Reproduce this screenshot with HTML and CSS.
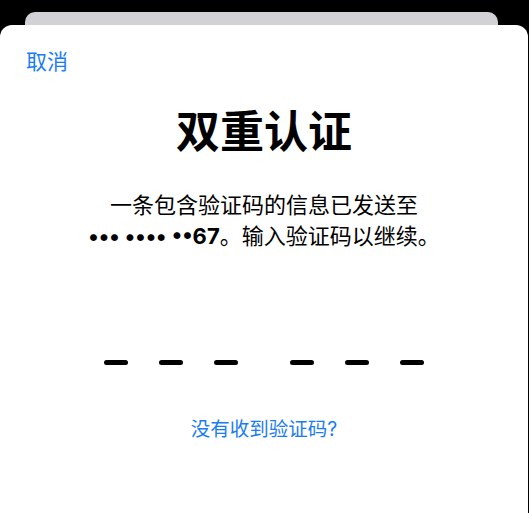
FILE: index.html
```html
<!DOCTYPE html>
<html lang="zh-CN">

<head>
    <meta charset="UTF-8">
    <meta name="viewport" content="width=device-width, initial-scale=1.0">
    <title>双重认证</title>
    <link rel="stylesheet" href="styles.css">
</head>

<body>
    <div class="sheet-back"></div>
    <div class="sheet">
        <div class="nav">
            <a class="cancel" href="#">取消</a>
        </div>
        <h1 class="title">双重认证</h1>
        <p class="desc">
            一条包含验证码的信息已发送至<br>
            <b>••• •••• ••67</b>。输入验证码以继续。
        </p>
        <div class="code">
            <div class="code-group">
                <span></span>
                <span></span>
                <span></span>
            </div>
            <div class="code-group">
                <span></span>
                <span></span>
                <span></span>
            </div>
        </div>
        <a class="resend" href="#">没有收到验证码?</a>
    </div>
</body>

</html>
```

FILE: styles.css
```css
html,
body {
    margin: 0;
    height: 100%;
    background: #000;
    font-family: Inter, "Noto Sans CJK SC", sans-serif;
    overflow: hidden;
}

.sheet-back {
    height: 13px;
    margin: 12px 31px 0 25px;
    background: #d1d1d6;
    border-radius: 10px 10px 0 0;
}

.sheet {
    height: 100%;
    margin-right: 1px;
    background: #fff;
    border-radius: 12px 12px 0 0;
    display: flex;
    flex-direction: column;
    align-items: center;
}

.nav {
    align-self: stretch;
    padding: 24px 26px 0;
}

.cancel {
    font-size: 21px;
    line-height: 26px;
    color: #1a7cf5;
    text-decoration: none;
}

.title {
    margin: 32px 0 0;
    font-size: 44px;
    line-height: 50px;
    font-weight: 700;
    color: #000;
}

.desc {
    margin: 33px 0 0;
    font-size: 22px;
    line-height: 31px;
    text-align: center;
    color: #000;
}

.desc b {
    font-weight: 700;
}

.code {
    display: flex;
    gap: 52px;
    margin-top: 108px;
}

.code-group {
    display: flex;
    gap: 31px;
}

.code-group > span {
    width: 24px;
    height: 5px;
    border-radius: 3px;
    background: #000;
}

.resend {
    margin-top: 52px;
    font-size: 19.5px;
    line-height: 24px;
    color: #1a7cf5;
    text-decoration: none;
}
```
